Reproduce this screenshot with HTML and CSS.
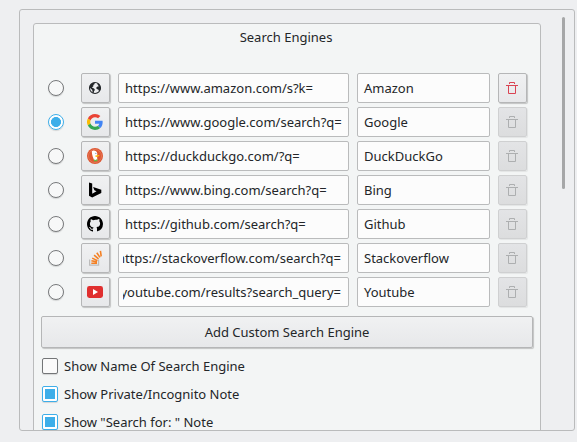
FILE: index.html
```html
<!DOCTYPE html>
<html lang="en">
<head>
<meta charset="utf-8">
<title>Search Engines</title>
<link rel="stylesheet" href="styles.css">
</head>
<body>
<svg class="defs" width="0" height="0"><symbol id="trash" viewBox="0 0 16 16"><path d="M5.500 4V2.500h5V4M2 5.500h12M4.500 6v7.500h7V6" fill="none" stroke="currentColor"/></symbol></svg>
<main class="scroll-area">
<section class="panel">
<h1>Search Engines</h1>
<div class="engines">
<div class="row"><span class="radio"></span><button class="icon"><svg viewBox="0 0 16 16"><circle cx="8" cy="8" r="5.500" fill="none" stroke="#232629" stroke-width="1.100"/><path d="M2.500 8 3 5.200 5.500 3l2-.6.200 1.500-1.400 1.100.1 1.200-1.500 1.300L7 8.600l1 1.300-1 1.200-.2 1.800-1.200-.5L5.300 10 3.500 8.300zM10.500 2.800l2.300 2.100.9 3.100-.7 2.700-1 .4-.8-1.700-1.600-.4-.3-1.500 1.300-1 1.300-.2-1.300-1.500z" fill="#232629"/></svg></button><div class="field url"><span>https://www.amazon.com/s?k=</span></div><div class="field name"><span>Amazon</span></div><button class="icon trash"><svg><use href="#trash"/></svg></button></div>
<div class="row"><span class="radio on"></span><button class="icon"><svg viewBox="0 0 48 48"><path fill="#ea4335" d="M24 9.500c3.540 0 6.710 1.220 9.210 3.600l6.850-6.850C35.900 2.380 30.470 0 24 0 14.620 0 6.510 5.380 2.560 13.220l7.980 6.190C12.430 13.720 17.740 9.500 24 9.500z"/><path fill="#4285f4" d="M46.980 24.550c0-1.570-.15-3.090-.38-4.550H24v9.020h12.940c-.58 2.960-2.260 5.480-4.780 7.180l7.730 6c4.510-4.180 7.090-10.360 7.090-17.650z"/><path fill="#fbbc05" d="M10.530 28.590A14.500 14.500 0 0 1 10.530 19.410L2.550 13.220A24 24 0 0 0 2.560 34.780z"/><path fill="#34a853" d="M24 48c6.480 0 11.930-2.130 15.890-5.810l-7.730-6c-2.150 1.450-4.920 2.300-8.160 2.300-6.260 0-11.570-4.220-13.470-9.910l-7.980 6.190C6.510 42.620 14.620 48 24 48z"/></svg></button><div class="field url"><span>https://www.google.com/search?q=</span></div><div class="field name"><span>Google</span></div><button class="icon trash off"><svg><use href="#trash"/></svg></button></div>
<div class="row"><span class="radio"></span><button class="icon"><svg viewBox="0 0 16 16"><circle cx="8" cy="8" r="8" fill="#de5833"/><circle cx="8" cy="8" r="6.500" fill="none" stroke="#e98a6e" stroke-width=".6"/><path d="M4.800 3.300 6.300 2.600q3.500 0 4 3l-.2 2.500.2 4.200-2.900.8L5.600 8.200 5 5.700z" fill="#fff"/><path d="M8.400 7.500q2.500-.9 4.300-.5-.6 1.500-3 2l-1.500-.5z" fill="#fdb813"/><path d="m6.800 11.300 1.500.6 2-.8v2.500l-1.700-.5-1.500.6z" fill="#65bc46"/><circle cx="8.900" cy="5.300" r=".5" fill="#2d4f8e"/></svg></button><div class="field url"><span>https://duckduckgo.com/?q=</span></div><div class="field name"><span>DuckDuckGo</span></div><button class="icon trash off"><svg><use href="#trash"/></svg></button></div>
<div class="row"><span class="radio"></span><button class="icon"><svg viewBox="0 0 16 16"><path d="m2 .5 3.200 1.100v10.100l4.300-2.500-2.100-1L6.100 5l8.200 2.700v3.200L5.200 15.500 2 13.700z" fill="#000"/></svg></button><div class="field url"><span>https://www.bing.com/search?q=</span></div><div class="field name"><span>Bing</span></div><button class="icon trash off"><svg><use href="#trash"/></svg></button></div>
<div class="row"><span class="radio"></span><button class="icon"><svg viewBox="0 0 16 16"><path d="M8 0C3.580 0 0 3.580 0 8c0 3.540 2.290 6.530 5.470 7.590.4.070.55-.17.55-.38 0-.19-.01-.82-.01-1.490-2.010.37-2.530-.49-2.690-.94-.09-.23-.48-.94-.82-1.130-.28-.15-.68-.52-.01-.53.63-.01 1.080.58 1.230.82.72 1.210 1.870.87 2.330.66.070-.52.28-.87.51-1.070-1.780-.2-3.640-.89-3.640-3.950 0-.87.31-1.590.82-2.150-.08-.2-.36-1.020.08-2.120 0 0 .67-.21 2.200.82A7.600 7.600 0 0 1 10 3.860c1.530-1.040 2.200-.82 2.200-.82.44 1.100.16 1.920.08 2.120.51.56.82 1.270.82 2.150 0 3.070-1.870 3.750-3.650 3.950.29.25.54.73.54 1.480 0 1.070-.01 1.930-.01 2.200 0 .21.150.46.550.38A8.010 8.010 0 0 0 16 8c0-4.420-3.580-8-8-8z"/></svg></button><div class="field url"><span>https://github.com/search?q=</span></div><div class="field name"><span>Github</span></div><button class="icon trash off"><svg><use href="#trash"/></svg></button></div>
<div class="row"><span class="radio"></span><button class="icon"><svg viewBox="0 0 16 16" fill="none"><path d="M2.600 9.500v5.700h9V9.500" stroke="#bcbbbb" stroke-width="1.200"/><path d="M4.300 13.200h5.800M4.400 10.800l5.700 1.100M5.200 8.100l5.300 2.500M7.100 5.200l4.400 3.700M9.800 2.800l3.200 4.600M13.400.8l.8 5.500" stroke="#f48024" stroke-width="1.600"/></svg></button><div class="field url long"><span>https://stackoverflow.com/search?q=</span></div><div class="field name"><span>Stackoverflow</span></div><button class="icon trash off"><svg><use href="#trash"/></svg></button></div>
<div class="row"><span class="radio"></span><button class="icon"><svg viewBox="0 0 16 16"><rect y="2" width="16" height="12" rx="2.400" fill="#e02f2f"/><path d="m6 5 5 3-5 3z" fill="#fff"/></svg></button><div class="field url long"><span>https://www.youtube.com/results?search_query=</span></div><div class="field name"><span>Youtube</span></div><button class="icon trash off"><svg><use href="#trash"/></svg></button></div>
</div>
<button class="add">Add Custom Search Engine</button>
<div class="options">
<div class="option"><span class="check"></span>Show Name Of Search Engine</div>
<div class="option"><span class="check on"></span>Show Private/Incognito Note</div>
<div class="option"><span class="check on"></span>Show "Search for: " Note</div>
</div>
</section>
<div class="scrollbar"></div>
</main>
</body>
</html>
```
FILE: styles.css
```css
* { box-sizing: border-box; }
body { margin: 0; padding: 9px 0 0 19px; height: 442px; overflow: hidden; background: #eeeff1; color: #232629; font: 13px/18px "Noto Sans", sans-serif; }
.defs { display: none; }
.scroll-area { width: 556px; height: 422px; border: 1px solid #babbbc; border-radius: 3px; padding: 13px 0 0 13px; display: flex; align-items: flex-start; overflow: hidden; }
.panel { width: 508px; height: 430px; flex: none; border: 1px solid #babbbc; border-radius: 3px; background: #f3f5f5; padding: 4px 7px 0; }
h1 { margin: 0 0 27px; padding-right: 2px; font-size: inherit; font-weight: 400; text-align: center; line-height: 18px; }
.engines { display: flex; flex-direction: column; gap: 4px; }
.row { display: flex; align-items: center; gap: 8px; height: 30px; }
.radio { width: 16px; height: 16px; margin: 0 9px 0 7px; border: 1px solid #77797b; border-radius: 50%; background: #f7f8f8; box-shadow: 0 1px 1px #0002; }
.radio.on { border-color: #3daee9; background: radial-gradient(circle, #3daee9 4.700px, #fff 5.300px); }
button { font: inherit; color: inherit; margin: 0; border: 1px solid #b5b6b7; border-radius: 2px; background: linear-gradient(#f0f1f2, #e7e8ea); box-shadow: 1px 1px 1px #0003; }
.icon { width: 29px; height: 30px; padding: 0 1px 0 0; display: flex; align-items: center; justify-content: center; }
.icon svg { width: 16px; height: 16px; }
.trash { color: #da4453; }
.trash.off { color: #adafb0; border-color: #cfd0d1; background: linear-gradient(#e3e4e6, #dcddde); box-shadow: 1px 1px 1px #0001; }
.field { height: 30px; border: 1px solid #babbbc; border-radius: 2px; background: #fcfcfc; padding: 5px 7px 5px 6px; white-space: nowrap; }
.url { width: 231px; }
.name { width: 133px; }
.long { padding-left: 4px; }
.long span { display: flex; justify-content: flex-end; overflow: hidden; }
.add { display: block; width: 492px; height: 32px; margin-top: 9px; padding: 0; }
.options { display: flex; flex-direction: column; gap: 10px; padding: 9px 0 0 1px; }
.option { display: flex; align-items: center; gap: 6px; }
.check { width: 16px; height: 16px; border: 1px solid #737577; border-radius: 2px; background: #fafafa; box-shadow: 0 1px 1px #0002; }
.check.on { border-color: #3daee9; background: linear-gradient(#3daee9, #3daee9) center / 10px 10px no-repeat #fff; }
.scrollbar { width: 3px; height: 172px; margin: -6px 0 0 21px; border-radius: 2px; background: #a6a7a8; }
```
